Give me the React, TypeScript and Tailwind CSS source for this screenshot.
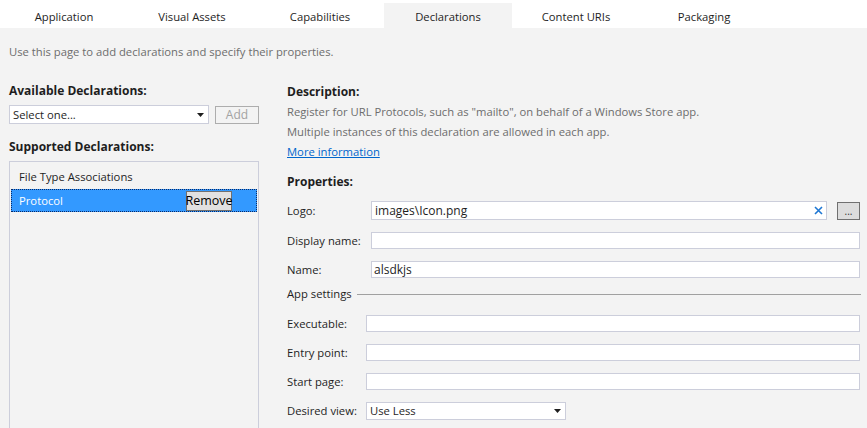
import React from "react";

const tabs = ["Application", "Visual Assets", "Capabilities", "Declarations", "Content URIs", "Packaging"];

function Arrow() {
  return (
    <svg width="7" height="4" viewBox="0 0 7 4" className="shrink-0">
      <path d="M0 0 H7 L3.5 4 Z" fill="#1e1e1e" />
    </svg>
  );
}

function TextBox({ value, className = "" }: { value?: string; className?: string }) {
  return (
    <div className={`h-[17px] bg-white border border-[#cccedb] flex items-center pl-[2px] text-[#1e1e1e] ${className}`}>
      {value}
    </div>
  );
}

function Row({
  label,
  children,
  className = "",
  labelW = "w-[84px]",
}: {
  label: string;
  children: React.ReactNode;
  className?: string;
  labelW?: string;
}) {
  return (
    <div className={`flex items-center pr-[1px] ${className}`}>
      <div className={`${labelW} shrink-0 text-[#1e1e1e]`}>{label}</div>
      {children}
    </div>
  );
}

export default function App() {
  return (
    <div className="w-[867px] h-[428px] overflow-hidden bg-[#f3f3f3] font-['Open_Sans',sans-serif] text-[11.25px] leading-[20px] text-[#1e1e1e]">
      <div className="h-[28px] bg-white flex">
        {tabs.map((t) => (
          <div
            key={t}
            className={`w-[128px] flex items-center justify-center ${t === "Declarations" ? "mt-[3px] pt-[2px] bg-[#f3f3f3]" : "pt-[5px]"}`}
          >
            {t}
          </div>
        ))}
      </div>
      <div className="pl-[9px] pt-[14px] text-[#6d6d6d]">Use this page to add declarations and specify their properties.</div>
      <div className="flex mt-[19px]">
        <div className="w-[250px] ml-[9px] shrink-0 flex flex-col">
          <div className="font-bold text-[12px] text-[#1e1e1e]">Available Declarations:</div>
          <div className="flex mt-[4px]">
            <div className="w-[200px] h-[19px] bg-white border border-[#cccedb] flex items-center justify-between pl-[3px] pr-[4px]">
              <span>Select one...</span>
              <Arrow />
            </div>
            <div className="ml-[6px] w-[44px] h-[18px] mt-[1px] border border-[#adadad] bg-[#f3f3f3] flex items-center justify-center text-[#a2a2a2] text-[12px]">
              Add
            </div>
          </div>
          <div className="font-bold text-[12px] mt-[13px]">Supported Declarations:</div>
          <div className="mt-[4px] h-[300px] border border-[#cccedb] px-[1px] pt-[3px]">
            <div className="h-[23px] flex items-center pl-[8px]">File Type Associations</div>
            <div className="mt-[1px] h-[23px] bg-[#3399ff] border border-dotted border-[#0b2a66] flex items-center justify-between pl-[7px] pr-[24px] text-white">
              <span>Protocol</span>
              <div className="h-[20px] w-[46px] bg-[#e1e1e1] border border-[#707070] flex items-center justify-center text-black text-[12.5px]">
                Remove
              </div>
            </div>
          </div>
        </div>
        <div className="ml-[28px] w-[574px] flex flex-col">
          <div className="font-bold text-[12px] mt-[1px]">Description:</div>
          <div className="text-[#6d6d6d]">Register for URL Protocols, such as "mailto", on behalf of a Windows Store app.</div>
          <div className="text-[#6d6d6d]">Multiple instances of this declaration are allowed in each app.</div>
          <div className="text-[#0066cc] underline">More information</div>
          <div className="font-bold text-[12px] mt-[10px]">Properties:</div>
          <Row label="Logo:" className="mt-[9px] h-[19px]">
            <div className="flex-1 h-[19px] bg-white border border-[#cccedb] flex items-center justify-between pl-[3px] pr-[3px] text-[12px]">
              <span>images\Icon.png</span>
              <svg width="9" height="9" viewBox="0 0 9 9">
                <path d="M1 1 L8 8 M8 1 L1 8" stroke="#1e77d3" strokeWidth="1.6" />
              </svg>
            </div>
            <div className="ml-[10px] w-[23px] h-[18px] bg-[#dddddd] border border-[#707070] flex items-center justify-center text-[10px] leading-[10px] text-[#333]">
              ...
            </div>
          </Row>
          <Row label="Display name:" className="mt-[12px] h-[17px]">
            <TextBox className="flex-1" />
          </Row>
          <Row label="Name:" className="mt-[12px] h-[17px]">
            <TextBox className="flex-1 text-[12px]" value="alsdkjs" />
          </Row>
          <div className="flex items-center mt-[6px] h-[20px]">
            <span>App settings</span>
            <div className="flex-1 ml-[5px] h-px bg-[#a0a0a0]" />
          </div>
          {["Executable:", "Entry point:", "Start page:"].map((l, i) => (
            <Row key={l} label={l} labelW="w-[79px]" className={`h-[17px] ${i === 0 ? "mt-[11px]" : "mt-[12px]"}`}>
              <TextBox className="flex-1" />
            </Row>
          ))}
          <Row label="Desired view:" labelW="w-[79px]" className="mt-[12px] h-[18px]">
            <div className="w-[200px] h-[18px] bg-white border border-[#cccedb] flex items-center justify-between pl-[3px] pr-[4px]">
              <span>Use Less</span>
              <Arrow />
            </div>
          </Row>
        </div>
      </div>
    </div>
  );
}
